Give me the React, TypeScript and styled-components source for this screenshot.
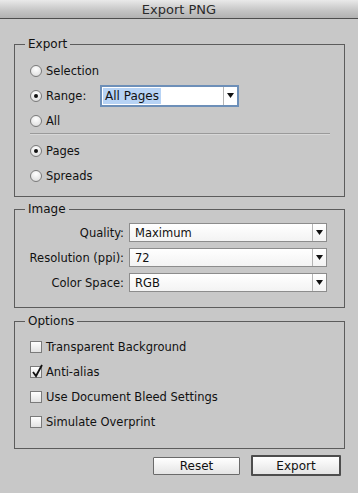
import styled, { createGlobalStyle } from 'styled-components';

const GlobalStyle = createGlobalStyle`
  html, body {
    margin: 0;
    padding: 0;
    background: #c8c8c8;
  }
  body {
    font-family: "DejaVu Sans", "Liberation Sans", sans-serif;
    font-size: 11.5px;
    color: #111;
  }
`;

const Dialog = styled.div`
  width: 358px;
  height: 493px;
  background: #c8c8c8;
  display: flex;
  flex-direction: column;
  overflow: hidden;
`;

const TitleBar = styled.div`
  height: 19px;
  border-bottom: 1px solid #4e4e4e;
  background: linear-gradient(#e9e9e9, #c4c4c4 60%, #b2b2b2);
  display: flex;
  align-items: center;
  justify-content: center;
  font-size: 13px;
  color: #2a2a2a;
  padding-top: 1px;
  box-sizing: border-box;
`;

const Body = styled.div`
  padding: 17px 13px 0 14px;
  display: flex;
  flex-direction: column;
`;

const Group = styled.fieldset<{ $top?: number; $bottom: number }>`
  margin: ${(p) => p.$top ?? 0}px 0 0 0;
  padding: 0 0 ${(p) => p.$bottom}px 0;
  border: 1px solid #5c5c5c;
  min-inline-size: 0;
`;

const Legend = styled.legend`
  margin-left: 10px;
  padding: 0 3px;
  line-height: 16px;
  font-size: 12px;
`;

const Gap = styled.div<{ $h: number }>`
  height: ${(p) => p.$h}px;
`;

const Row = styled.label`
  height: 25px;
  display: flex;
  align-items: center;
  padding-left: 15px;
  gap: 4px;
`;

const Radio = styled.span<{ $on?: boolean }>`
  width: 12px;
  height: 12px;
  box-sizing: border-box;
  border-radius: 50%;
  border: 1px solid #7a7a7a;
  background: radial-gradient(circle at 50% 30%, #ffffff, #e4e4e4 70%, #cfcfcf);
  display: flex;
  align-items: center;
  justify-content: center;
  flex-shrink: 0;
  &::after {
    content: '';
    display: ${(p) => (p.$on ? 'block' : 'none')};
    width: 4px;
    height: 4px;
    border-radius: 50%;
    background: #111;
  }
`;

const Box = styled.span`
  position: relative;
  width: 12px;
  height: 12px;
  box-sizing: border-box;
  border: 1px solid #7a7a7a;
  background: linear-gradient(#ffffff, #e2e2e2);
  flex-shrink: 0;
`;

const Check = styled.svg`
  position: absolute;
  left: 0px;
  top: -3px;
`;

const RangeLabel = styled.span`
  width: 50px;
`;

const Combo = styled.div`
  width: 139px;
  height: 22px;
  box-sizing: border-box;
  border: 2px solid #6d8fb8;
  background: #fff;
  display: flex;
  align-items: center;
  padding-left: 1px;
`;

const Selected = styled.span`
  background: #b7d3f5;
  padding: 0 2px;
  line-height: 16px;
  font-size: 12px;
`;

const Spacer = styled.span`
  flex: 1;
`;

const ArrowCell = styled.span`
  width: 13px;
  height: 100%;
  border-left: 1px solid #b5b5b5;
  display: flex;
  align-items: center;
  justify-content: center;
`;

const Divider = styled.div`
  height: 1px;
  margin: 0 14px 3px 15px;
  background: #9a9a9a;
  border-bottom: 1px solid #d8d8d8;
`;

const Grid = styled.div`
  display: grid;
  grid-template-columns: 109px 198px;
  column-gap: 5px;
  grid-auto-rows: 25px;
  align-items: center;
  padding-top: 3px;
`;

const FieldLabel = styled.span`
  text-align: right;
`;

const Select = styled.div`
  height: 19px;
  box-sizing: border-box;
  border: 1px solid #8c8c8c;
  background: linear-gradient(#ffffff, #f3f3f3);
  display: flex;
  align-items: center;
  padding-left: 5px;
`;

const Buttons = styled.div`
  display: flex;
  justify-content: flex-end;
  align-items: center;
  gap: 11px;
  padding: 6px 17px 0 0;
`;

const Button = styled.button<{ $primary?: boolean }>`
  font-family: inherit;
  font-size: 12px;
  color: #111;
  width: ${(p) => (p.$primary ? 90 : 87)}px;
  height: ${(p) => (p.$primary ? 21 : 18)}px;
  box-sizing: border-box;
  border: ${(p) => (p.$primary ? '2px solid #4d4d4d' : '1px solid #6a6a6a')};
  background: linear-gradient(#ffffff, #e4e4e4);
  padding: 0;
  border-radius: 1px;
`;

const Arrow = () => (
  <svg width="7" height="5" viewBox="0 0 7 5">
    <path d="M0 0 H7 L3.5 5 Z" fill="#111" />
  </svg>
);

const Dropdown = ({ value }: { value: string }) => (
  <Select>
    {value}
    <Spacer />
    <ArrowCell>
      <Arrow />
    </ArrowCell>
  </Select>
);

const CheckRow = ({ label, checked }: { label: string; checked?: boolean }) => (
  <Row>
    <Box>
      {checked && (
        <Check width="13" height="14" viewBox="0 0 13 14">
          <path d="M2 8 L5 12 L11 1" stroke="#111" strokeWidth="1.8" fill="none" />
        </Check>
      )}
    </Box>
    {label}
  </Row>
);

const App = () => {
  return (
    <Dialog>
      <GlobalStyle />
      <TitleBar>Export PNG</TitleBar>
      <Body>
        <Group $bottom={8}>
          <Legend>Export</Legend>
          <Gap $h={6} />
          <Row>
            <Radio />
            Selection
          </Row>
          <Row>
            <Radio $on />
            <RangeLabel>Range:</RangeLabel>
            <Combo>
              <Selected>All Pages</Selected>
              <Spacer />
              <ArrowCell>
                <Arrow />
              </ArrowCell>
            </Combo>
          </Row>
          <Row>
            <Radio />
            All
          </Row>
          <Divider />
          <Row>
            <Radio $on />
            Pages
          </Row>
          <Row>
            <Radio />
            Spreads
          </Row>
        </Group>
        <Group $top={4} $bottom={12}>
          <Legend>Image</Legend>
          <Grid>
            <FieldLabel>Quality:</FieldLabel>
            <Dropdown value="Maximum" />
            <FieldLabel>Resolution (ppi):</FieldLabel>
            <Dropdown value="72" />
            <FieldLabel>Color Space:</FieldLabel>
            <Dropdown value="RGB" />
          </Grid>
        </Group>
        <Group $top={5} $bottom={14}>
          <Legend>Options</Legend>
          <Gap $h={5} />
          <CheckRow label="Transparent Background" />
          <CheckRow label="Anti-alias" checked />
          <CheckRow label="Use Document Bleed Settings" />
          <CheckRow label="Simulate Overprint" />
        </Group>
      </Body>
      <Buttons>
        <Button>Reset</Button>
        <Button $primary>Export</Button>
      </Buttons>
    </Dialog>
  );
};

export default App;
